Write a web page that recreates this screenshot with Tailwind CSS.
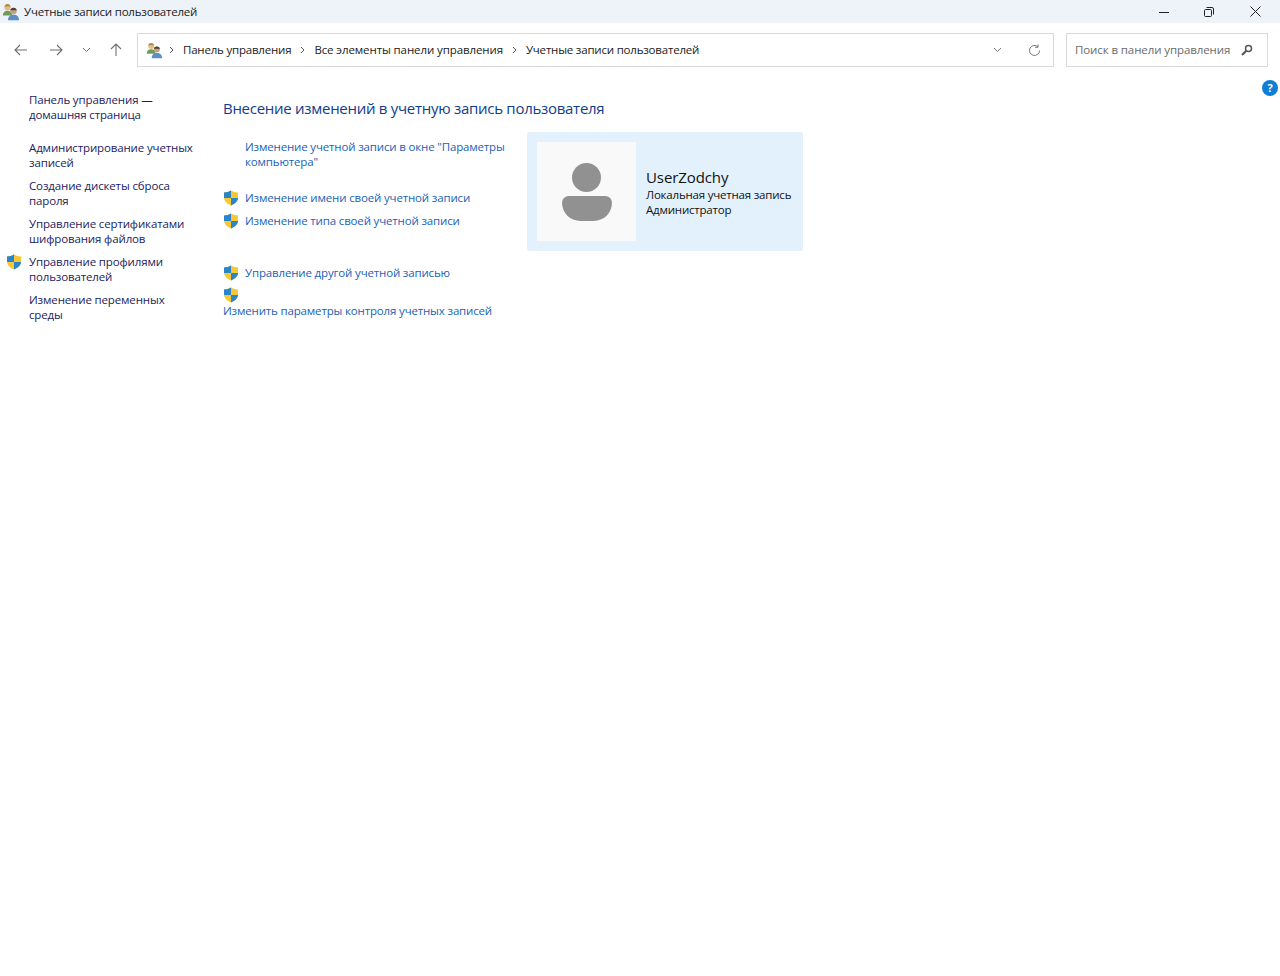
<!DOCTYPE html>
<html lang="ru">
<head>
  <meta charset="UTF-8" />
  <title>Учетные записи пользователей</title>
  <script src="https://cdn.jsdelivr.net/npm/@tailwindcss/browser@4"></script>
</head>
<body class="bg-white h-[976px] overflow-hidden font-['Open_Sans','Noto_Sans',sans-serif] text-[11.500px] leading-[15px] tracking-[-0.2px]">

  <svg class="hidden">
    <symbol id="shield" viewBox="0 0 16 16">
      <path d="M8 .5C6 1.800 3.600 2.500 1 2.500V7.500c0 3.700 3 6.400 7 8 4-1.600 7-4.300 7-8V2.500C12.400 2.500 10 1.800 8 .5z" fill="#f6c835"/>
      <path d="M8 .5C6 1.800 3.600 2.500 1 2.500V8h7z" fill="#2a86c8"/>
      <path d="M8 8v7.500c4-1.600 7-4.300 7-7.500z" fill="#2a86c8"/>
    </symbol>
    <symbol id="users" viewBox="0 0 18 18">
      <path d="M.8 12.500c0-3.300 2-4.800 4.700-4.800s4.700 1.500 4.700 4.800z" fill="#6f9c55"/>
      <circle cx="5.500" cy="4.300" r="3.100" fill="#e0bd8c"/>
      <path d="M2.500 3.800C2.700 1.800 4 1 5.500 1s2.800.8 3 2.800C7 3.400 4 3.400 2.500 3.800z" fill="#b38b3e"/>
      <path d="M6 17.200c0-3.700 2.200-5.500 5.500-5.500s5.500 1.800 5.500 5.500z" fill="#5a8fc6"/>
      <circle cx="11.500" cy="8" r="3.200" fill="#c9a07c"/>
      <path d="M8.300 7.500C8.500 5.500 10 4.700 11.500 4.700s3 .8 3.200 2.800c-1.600-.5-4.800-.5-6.400 0z" fill="#4a4038"/>
    </symbol>
  </svg>

  <!-- заголовок окна -->
  <div class="h-[23px] bg-[#eef3fa] flex items-center pl-[2px] pr-[2px] text-[#1a1a1a]">
    <svg class="w-[18px] h-[18px]"><use href="#users"/></svg>
    <span class="ml-[4px]">Учетные записи пользователей</span>
    <div class="ml-auto flex items-center h-full">
      <button class="w-[45px] h-full flex items-center justify-center">
        <svg width="10" height="10" viewBox="0 0 10 10"><path d="M0 5.500h10" stroke="#222" fill="none"/></svg>
      </button>
      <button class="w-[46px] h-full flex items-center justify-center">
        <svg width="10" height="10" viewBox="0 0 10 10" fill="none" stroke="#222"><rect x=".5" y="2.500" width="7" height="7" rx="1"/><path d="M2.500 .5H8a1.500 1.500 0 0 1 1.500 1.500v5.500"/></svg>
      </button>
      <button class="w-[46px] h-full flex items-center justify-center">
        <svg width="11" height="11" viewBox="0 0 11 11" fill="none" stroke="#222"><path d="M.5.5l10 10M10.500.5l-10 10"/></svg>
      </button>
    </div>
  </div>

  <!-- панель адреса -->
  <div class="h-[54px] flex items-center pl-[14px] pr-[12px]">
    <div class="w-[123px] flex items-center text-[#6f6f6f]">
      <svg width="14" height="12" viewBox="0 0 14 12" fill="none" stroke="currentColor" stroke-width="1.100"><path d="M13 6H1M6 1 1 6l5 5"/></svg>
      <svg class="ml-[21px]" width="14" height="12" viewBox="0 0 14 12" fill="none" stroke="currentColor" stroke-width="1.100"><path d="M1 6h12M8 1l5 5-5 5"/></svg>
      <svg class="ml-[19px]" width="9" height="6" viewBox="0 0 9 6" fill="none" stroke="currentColor"><path d="M1 1l3.500 3.500L8 1"/></svg>
      <svg class="ml-[19px]" width="12" height="14" viewBox="0 0 12 14" fill="none" stroke="currentColor" stroke-width="1.100"><path d="M6 13V1M1 6l5-5 5 5"/></svg>
    </div>
    <div class="w-[917px] h-[34px] border border-[#d9d9d9] flex items-center pl-[8px] text-[#1a1a1a]">
      <svg class="w-[17px] h-[17px]"><use href="#users"/></svg>
      <svg class="ml-[6px] mr-[9px]" width="5" height="8" viewBox="0 0 5 8" fill="none" stroke="#555"><path d="M1 1l3 3-3 3"/></svg>
      <span class="-mt-px">Панель управления</span>
      <svg class="mx-[9px]" width="5" height="8" viewBox="0 0 5 8" fill="none" stroke="#555"><path d="M1 1l3 3-3 3"/></svg>
      <span class="-mt-px tracking-[-0.1px]">Все элементы панели управления</span>
      <svg class="mx-[9px]" width="5" height="8" viewBox="0 0 5 8" fill="none" stroke="#555"><path d="M1 1l3 3-3 3"/></svg>
      <span class="-mt-px">Учетные записи пользователей</span>
      <svg class="ml-auto" width="9" height="6" viewBox="0 0 9 6" fill="none" stroke="#777"><path d="M1 1l3.500 3.500L8 1"/></svg>
      <svg class="ml-[26px] mr-[12px]" width="13" height="13" viewBox="0 0 13 13" fill="none" stroke="#777"><path d="M11.500 6.500a5 5 0 1 1-1.600-3.700M10 .5v2.800H7.200"/></svg>
    </div>
    <div class="ml-[12px] w-[202px] h-[34px] border border-[#d9d9d9] flex items-center pl-[8px] text-[#6b6b6b]">
      <span class="-mt-px tracking-[-0.1px]">Поиск в панели управления</span>
      <svg class="ml-auto mr-[14px]" width="12" height="12" viewBox="0 0 12 12" fill="none" stroke="#555" stroke-width="1.500"><circle cx="7.500" cy="4.500" r="3"/><path d="M5.300 6.700 1 11" stroke-width="2"/></svg>
    </div>
  </div>

  <div class="relative flex">
    <div class="absolute right-[2px] top-[3px] w-[16px] h-[16px] rounded-full bg-[#0f7fd6] text-white text-[11px] leading-[16px] text-center font-bold">?</div>

    <!-- боковая панель -->
    <nav class="w-[223px] shrink-0 pl-[6px] pt-[15px] text-[#1c1c5e] tracking-[-0.14px]">
      <p class="pl-[23px]">Панель управления —<br>домашняя страница</p>
      <div class="mt-[18px] flex flex-col gap-[8px]">
        <a class="pl-[23px]">Администрирование учетных<br>записей</a>
        <a class="pl-[23px]">Создание дискеты сброса<br>пароля</a>
        <a class="pl-[23px]">Управление сертификатами<br>шифрования файлов</a>
        <a class="flex">
          <svg class="w-[16px] h-[16px] shrink-0 mr-[7px]"><use href="#shield"/></svg>
          <span>Управление профилями<br>пользователей</span>
        </a>
        <a class="pl-[23px]">Изменение переменных<br>среды</a>
      </div>
    </nav>

    <main class="flex-1 pt-[21px]">
      <h1 class="text-[#0f3d8c] text-[15px] leading-[20px] tracking-[-0.28px]">Внесение изменений в учетную запись пользователя</h1>
      <div class="mt-[14px] flex">
        <div class="w-[304px] shrink-0 pt-[7px] text-[#1a62b8] tracking-[-0.16px]">
          <a class="block pl-[22px]">Изменение учетной записи в окне "Параметры<br>компьютера"</a>
          <a class="mt-[21px] flex">
            <svg class="w-[16px] h-[16px] shrink-0 mr-[6px]"><use href="#shield"/></svg>
            <span>Изменение имени своей учетной записи</span>
          </a>
          <a class="mt-[7px] flex">
            <svg class="w-[16px] h-[16px] shrink-0 mr-[6px]"><use href="#shield"/></svg>
            <span>Изменение типа своей учетной записи</span>
          </a>
          <a class="mt-[36px] flex">
            <svg class="w-[16px] h-[16px] shrink-0 mr-[6px]"><use href="#shield"/></svg>
            <span>Управление другой учетной записью</span>
          </a>
          <a class="mt-[6px] block">
            <svg class="w-[16px] h-[16px] block"><use href="#shield"/></svg>
            <span class="block">Изменить параметры контроля учетных записей</span>
          </a>
        </div>
        <div class="w-[276px] h-[119px] bg-[#e3f1fd] rounded-[2px] flex items-center pl-[10px]">
          <div class="w-[99px] h-[99px] bg-[#f9f9f9] flex flex-col items-center justify-center shrink-0">
            <div class="w-[29px] h-[29px] rounded-full bg-[#919191]"></div>
            <div class="mt-[4px] w-[50px] h-[25px] bg-[#919191] rounded-t-[8px] rounded-b-[22px]"></div>
          </div>
          <div class="ml-[10px] mt-[1px]">
            <div class="text-[#111] text-[15px] leading-[20px] tracking-[-0.1px]">UserZodchy</div>
            <div class="text-[#111]">Локальная учетная запись</div>
            <div class="text-[#111]">Администратор</div>
          </div>
        </div>
      </div>
    </main>
  </div>
</body>
</html>
